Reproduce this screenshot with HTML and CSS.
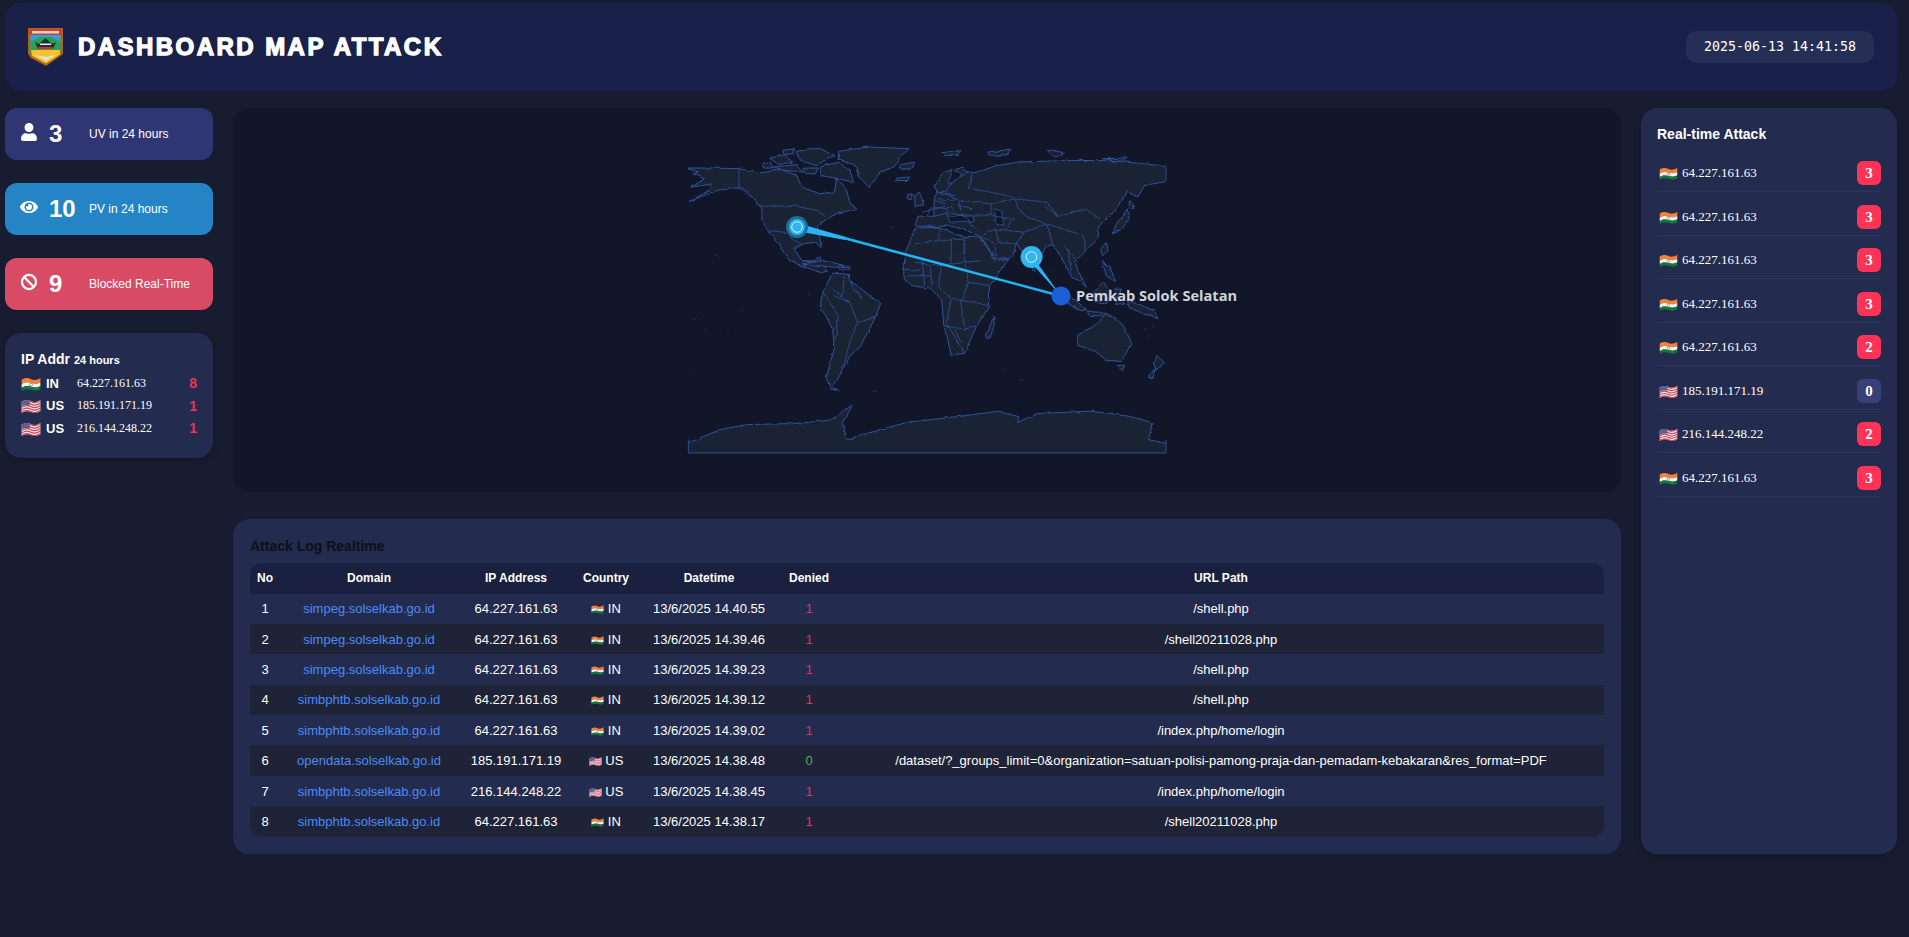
FILE: index.html
```html
<!DOCTYPE html>
<html>
  <head>
    <meta charset="utf-8" />
    <title>Dashboard Map Attack</title>
    <meta name="viewport" content="width=device-width, initial-scale=1" />
    <link rel="stylesheet" href="styles.css">
  </head>
  <body>
    <svg class="defs" width="0" height="0">
      <symbol id="flag-in" viewBox="0 0 32 24">
        <path fill="#f58233" d="M1 6C7 2 12 3 16 5S25 7 31 3V10C25 14 20 12 16 11S7 9 1 13Z"/>
        <path fill="#f4f2ee" d="M1 13C7 9 12 10 16 11S25 14 31 10V16C25 20 20 18 16 17S7 15 1 19Z"/>
        <path fill="#0f7a3a" d="M1 19C7 15 12 16 16 17S25 20 31 16V21C25 25 20 23 16 22S7 20 1 24Z"/>
        <circle cx="16" cy="14" r="2.4" fill="none" stroke="#5a6a9a" stroke-width=".9"/>
      </symbol>
      <symbol id="flag-us" viewBox="0 0 32 24">
        <path fill="#efe6e8" d="M1 6C7 2 12 3 16 5S25 7 31 3V21C25 25 20 23 16 22S7 20 1 24Z"/>
        <g fill="none" stroke="#c8485c" stroke-width="1.9">
          <path d="M1 7C7 3 12 4 16 6S25 8 31 4"/>
          <path d="M1 11C7 7 12 8 16 10S25 12 31 8"/>
          <path d="M1 15C7 11 12 12 16 14S25 16 31 12"/>
          <path d="M1 19C7 15 12 16 16 18S25 20 31 16"/>
          <path d="M1 23C7 19 12 20 16 22S25 24 31 20"/>
        </g>
        <path fill="#5a5f8e" d="M1 6C5 3.500 10 3 14 4.400V12C10 10.500 5 11 1 13.500Z"/>
      </symbol>
      <filter id="rough" x="-3%" y="-3%" width="106%" height="106%" color-interpolation-filters="sRGB">
        <feTurbulence type="fractalNoise" baseFrequency="0.045" numOctaves="3" seed="7"/>
        <feDisplacementMap in="SourceGraphic" scale="9" xChannelSelector="R" yChannelSelector="G"/>
      </filter>
      <clipPath id="map-clip">
        <rect x="47" y="20" width="1249" height="950"/>
      </clipPath>
    </svg>

    <header class="topbar">
      <div class="brand">
        <svg class="logo" viewBox="0 0 35 38">
          <path fill="#a8651c" d="M0 0H35V26L18 38 3 30 0 26Z"/>
          <path fill="#e5322e" d="M1.500 1.500H33.500V7H1.500Z"/>
          <path fill="#f5d9c8" d="M4 3H31V5.500H4Z"/>
          <path fill="#2aa4e0" d="M2.500 7H32.500V22H2.500Z"/>
          <path fill="#2f9e4f" d="M2.500 14 12 9H23L32.500 14V24H2.500Z"/>
          <path fill="#12343a" d="M7 14 11 16 17.500 10 24 16 28 14 25 21H10Z"/>
          <path fill="#dfeef0" d="M12 15.500H23V17H12Z"/>
          <path fill="#e0262b" d="M10 19H25V21H10Z"/>
          <path fill="#f4c430" d="M3 22H32V26.500L18 35.500 4 28Z"/>
          <path fill="#dfe3d8" d="M7 27 18 29 28 27 18 33Z"/>
        </svg>
        <h1 class="brand-title">DASHBOARD MAP ATTACK</h1>
      </div>
      <div class="clock">2025-06-13 14:41:58</div>
    </header>

    <main class="layout">
      <aside class="left-col">
        <div class="stat stat-uv">
          <svg class="stat-icon" viewBox="0 0 448 512"><path fill="currentColor" d="M224 256c70.700 0 128-57.300 128-128S294.700 0 224 0 96 57.300 96 128s57.300 128 128 128zm89.600 32h-16.700c-22.200 10.200-46.900 16-72.900 16s-50.600-5.800-72.900-16h-16.700C60.200 288 0 348.200 0 422.400V464c0 26.500 21.500 48 48 48h352c26.500 0 48-21.500 48-48v-41.600c0-74.200-60.200-134.400-134.400-134.400z"/></svg>
          <span class="stat-num">3</span>
          <span class="stat-label">UV in 24 hours</span>
        </div>
        <div class="stat stat-pv">
          <svg class="stat-icon" viewBox="0 0 576 512"><path fill="currentColor" d="M572.520 241.400C518.290 135.590 410.930 64 288 64S57.680 135.640 3.480 241.410a32.350 32.350 0 0 0 0 29.190C57.710 376.410 165.070 448 288 448s230.320-71.640 284.520-177.410a32.350 32.350 0 0 0 0-29.190zM288 400a144 144 0 1 1 144-144 143.930 143.930 0 0 1-144 144zm0-240a95.310 95.310 0 0 0-25.310 3.790 47.850 47.850 0 0 1-66.900 66.900A95.780 95.780 0 1 0 288 160z"/></svg>
          <span class="stat-num">10</span>
          <span class="stat-label">PV in 24 hours</span>
        </div>
        <div class="stat stat-block">
          <svg class="stat-icon" viewBox="0 0 20 20"><g fill="none" stroke="currentColor" stroke-width="2.500"><circle cx="10" cy="10" r="7.800"/><path d="M4.500 4.500 15.500 15.500"/></g></svg>
          <span class="stat-num">9</span>
          <span class="stat-label">Blocked Real-Time</span>
        </div>
        <section class="ip-card">
          <h3 class="ip-title">IP Addr <small>24 hours</small></h3>
          <div class="ip-row">
            <svg class="flag"><use href="#flag-in"/></svg><b class="ip-code">IN</b><span class="ip-addr">64.227.161.63</span><b class="ip-count">8</b>
          </div>
          <div class="ip-row">
            <svg class="flag"><use href="#flag-us"/></svg><b class="ip-code">US</b><span class="ip-addr">185.191.171.19</span><b class="ip-count">1</b>
          </div>
          <div class="ip-row">
            <svg class="flag"><use href="#flag-us"/></svg><b class="ip-code">US</b><span class="ip-addr">216.144.248.22</span><b class="ip-count">1</b>
          </div>
        </section>
      </aside>

      <div class="center-col">
        <section class="map-panel">
          <div class="map">
            <!-- land traced by hand, stretched to the box -->
            <svg class="map-land" viewBox="47 55 1249 915" preserveAspectRatio="none">
              <g clip-path="url(#map-clip)">
                <g filter="url(#rough)">
                  <g class="land">
                    <path d="M40 118 75 130 60 135 90 150 55 175 110 165 100 185 60 212 50 218 110 190 150 178 190 178 215 205 240 240 240 275 255 305 285 345 310 392 345 410 380 425 398 432 412 425 400 410 395 385 378 395 345 395 325 362 345 345 380 340 395 355 392 330 385 300 405 272 440 252 488 240 470 222 460 180 435 150 430 190 385 195 345 175 330 140 290 122 240 132 180 120 115 118Z"/>
                    <path d="M260 88 300 78 320 100 285 108ZM330 68 390 58 430 80 380 110 340 95ZM270 115 330 108 350 130 300 125ZM390 115 440 100 470 125 480 160 440 150 395 140ZM240 105 262 100 268 118 245 118ZM350 118 385 118 380 135 355 135ZM295 65 325 60 322 75 298 78Z"/>
                    <path d="M440 68 520 55 625 60 600 85 585 115 550 130 520 176 495 145 482 108 440 90Z"/>
                    <path d="M400 487 425 432 465 436 470 455 495 475 550 525 535 568 497 652 470 680 445 735 425 775 445 787 420 778 408 745 430 655 425 600 392 530Z"/>
                    <path d="M345 405 395 395 425 400 455 410 430 415 395 410ZM590 148 625 145 622 155 590 155ZM440 412 470 412 470 420 442 420Z"/>
                    <path d="M640 298 700 295 770 325 812 325 850 395 885 388 835 470 835 530 800 592 770 672 735 677 715 585 710 512 680 477 632 470 610 440 615 372Z"/>
                    <path d="M846 560 825 625 835 628 847 590Z"/>
                    <path d="M640 292 648 262 690 262 690 210 705 160 745 122 795 132 850 112 910 100 1050 95 1150 96 1240 105 1310 115 1310 155 1240 170 1222 205 1195 190 1165 240 1122 290 1118 330 1085 368 1055 400 1090 478 1070 455 1050 445 1030 402 1002 347 982 352 950 428 925 372 905 345 895 385 850 388 812 322 770 302 735 292 700 292Z"/>
                    <path d="M690 172 715 130 760 118 778 130 745 150 720 190 700 192ZM640 200 652 190 664 228 640 232ZM622 198 635 195 632 212 620 210ZM600 108 640 100 630 122 605 120ZM830 70 890 62 880 78 835 80ZM710 72 760 66 750 80 715 80ZM985 62 1030 72 1005 85ZM1130 90 1195 88 1180 98Z"/>
                    <path d="M1172 280 1195 240 1200 270 1180 300 1155 312ZM1200 215 1215 235 1200 238ZM1125 362 1140 340 1145 365 1130 380ZM1130 395 1150 415 1165 460 1140 440Z"/>
                    <path d="M1002 482 1050 505 1088 540 1075 545 1025 515ZM1090 545 1150 555 1150 562 1095 558ZM1105 490 1130 460 1155 485 1140 525 1112 520ZM1165 480 1180 480 1170 505 1190 525 1165 525ZM1195 510 1265 545 1275 565 1240 555 1200 535Z"/>
                    <path d="M1065 618 1110 588 1140 555 1172 575 1185 590 1206 640 1180 697 1140 692 1105 660 1066 650ZM1170 708 1188 708 1180 725ZM1272 678 1292 700 1270 720 1265 705ZM1268 715 1262 745 1250 745Z"/>
                    <path d="M40 945 130 900 200 885 320 882 420 872 478 825 450 880 462 930 520 910 620 878 760 860 860 845 912 862 905 880 960 852 1100 845 1200 860 1262 880 1250 930 1310 945 1310 990 40 990Z"/>
                  </g>
                  <g class="seas">
                    <path d="M725 262 790 258 795 275 730 280ZM848 240 866 245 872 290 852 282ZM740 120 760 135 745 160 725 165Z"/>
                  </g>
                  <g class="borders">
                    <path d="M180 120V175L240 232H330L385 245 405 262"/>
                    <path d="M255 305 300 310 340 345 320 358M345 395 380 400"/>
                    <path d="M425 480 470 520 490 580 470 640 445 735M400 490 440 560 430 650M470 455 500 510M490 580 535 565M455 440 450 500M430 500 470 520"/>
                    <path d="M640 345 700 335 705 300M705 335 770 330 770 400 810 395M640 400 710 410 700 470M710 410 770 400 780 460 840 470M700 470 735 510 800 520M735 510 720 590 770 600 800 590M660 395 665 470M620 440 680 440M735 400V330M780 460 760 520 770 600M725 585 770 672M680 410 685 470M610 420 660 425M800 520 835 530M745 600 760 640"/>
                    <path d="M860 340 905 345 925 310 850 300 812 322M840 225 900 210 985 220 1015 262 1085 240 1120 270M900 210 925 260 985 285 1000 345M925 310 985 285M985 285 1080 320 1085 368M1015 262 980 230M1000 345 1030 400M1040 360 1050 440M1025 345 1065 400M860 340 850 300M812 322 850 345 850 388M875 300 900 270"/>
                    <path d="M690 262 735 250 770 262 800 302M700 210 755 215 760 245M720 190 750 215M660 250 720 232M680 235 730 240M760 215 840 225 835 260 770 262M780 180 790 132M835 260 900 270M690 215 720 225M705 195 745 200M720 240 725 262M735 232 745 252M750 228 790 240M672 262 680 238M790 180 880 200 900 210"/>
                  </g>
                </g>
              </g>
              <path class="map-edge" d="M48 930V970H1296V930M1296 155V115"/>
              <g class="islands">
                <path d="M118 378h6M128 390h4M60 570h5M90 600h4M915 752h8M1240 600h5M1260 590h5M360 495h5M575 295h6M60 725h4M530 785h10M185 545h3M150 610h3M70 560h3M190 540h2M1250 620h4M960 470h3M1000 420h3M870 720h3"/>
              </g>
            </svg>
            <svg class="map-marks" viewBox="0 0 478 306">
              <path class="trail" d="M109 76 158 90 157 93 109 84Z"/>
              <path class="trail-line" d="M156 91 373 149"/>
              <path class="trail" d="M343 108 350 117 373 149 347 120 340 112Z"/>
              <circle class="pin-halo" cx="109" cy="80" r="11"/>
              <circle class="pin-core" cx="109" cy="80" r="8"/>
              <circle class="pin-ring" cx="109" cy="80" r="5.300"/>
              <circle class="pin-core" cx="343.500" cy="110" r="11"/>
              <circle class="pin-ring" cx="343.500" cy="110" r="5.300"/>
              <circle class="pin-target" cx="373" cy="149" r="9.500"/>
            </svg>
            <span class="map-label">Pemkab Solok Selatan</span>
          </div>
        </section>

        <section class="log-panel">
          <h3 class="log-title">Attack Log Realtime</h3>
          <div class="log-wrap">
            <table class="log-table">
              <colgroup>
                <col class="c-no"><col class="c-domain"><col class="c-ip"><col class="c-country"><col class="c-date"><col class="c-denied"><col>
              </colgroup>
              <thead>
                <tr><th>No</th><th>Domain</th><th>IP Address</th><th>Country</th><th>Datetime</th><th>Denied</th><th>URL Path</th></tr>
              </thead>
              <tbody>
                <tr><td>1</td><td class="domain">simpeg.solselkab.go.id</td><td>64.227.161.63</td><td><svg class="flag-sm"><use href="#flag-in"/></svg> IN</td><td>13/6/2025 14.40.55</td><td class="denied">1</td><td>/shell.php</td></tr>
                <tr><td>2</td><td class="domain">simpeg.solselkab.go.id</td><td>64.227.161.63</td><td><svg class="flag-sm"><use href="#flag-in"/></svg> IN</td><td>13/6/2025 14.39.46</td><td class="denied">1</td><td>/shell20211028.php</td></tr>
                <tr><td>3</td><td class="domain">simpeg.solselkab.go.id</td><td>64.227.161.63</td><td><svg class="flag-sm"><use href="#flag-in"/></svg> IN</td><td>13/6/2025 14.39.23</td><td class="denied">1</td><td>/shell.php</td></tr>
                <tr><td>4</td><td class="domain">simbphtb.solselkab.go.id</td><td>64.227.161.63</td><td><svg class="flag-sm"><use href="#flag-in"/></svg> IN</td><td>13/6/2025 14.39.12</td><td class="denied">1</td><td>/shell.php</td></tr>
                <tr><td>5</td><td class="domain">simbphtb.solselkab.go.id</td><td>64.227.161.63</td><td><svg class="flag-sm"><use href="#flag-in"/></svg> IN</td><td>13/6/2025 14.39.02</td><td class="denied">1</td><td>/index.php/home/login</td></tr>
                <tr><td>6</td><td class="domain">opendata.solselkab.go.id</td><td>185.191.171.19</td><td><svg class="flag-sm"><use href="#flag-us"/></svg> US</td><td>13/6/2025 14.38.48</td><td class="allowed">0</td><td>/dataset/?_groups_limit=0&amp;organization=satuan-polisi-pamong-praja-dan-pemadam-kebakaran&amp;res_format=PDF</td></tr>
                <tr><td>7</td><td class="domain">simbphtb.solselkab.go.id</td><td>216.144.248.22</td><td><svg class="flag-sm"><use href="#flag-us"/></svg> US</td><td>13/6/2025 14.38.45</td><td class="denied">1</td><td>/index.php/home/login</td></tr>
                <tr><td>8</td><td class="domain">simbphtb.solselkab.go.id</td><td>64.227.161.63</td><td><svg class="flag-sm"><use href="#flag-in"/></svg> IN</td><td>13/6/2025 14.38.17</td><td class="denied">1</td><td>/shell20211028.php</td></tr>
              </tbody>
            </table>
          </div>
        </section>
      </div>

      <aside class="feed">
        <h3 class="feed-title">Real-time Attack</h3>
        <ul class="feed-list">
          <li class="feed-row"><svg class="flag"><use href="#flag-in"/></svg><span class="feed-ip">64.227.161.63</span><b class="badge">3</b></li>
          <li class="feed-row"><svg class="flag"><use href="#flag-in"/></svg><span class="feed-ip">64.227.161.63</span><b class="badge">3</b></li>
          <li class="feed-row"><svg class="flag"><use href="#flag-in"/></svg><span class="feed-ip">64.227.161.63</span><b class="badge">3</b></li>
          <li class="feed-row"><svg class="flag"><use href="#flag-in"/></svg><span class="feed-ip">64.227.161.63</span><b class="badge">3</b></li>
          <li class="feed-row"><svg class="flag"><use href="#flag-in"/></svg><span class="feed-ip">64.227.161.63</span><b class="badge">2</b></li>
          <li class="feed-row"><svg class="flag"><use href="#flag-us"/></svg><span class="feed-ip">185.191.171.19</span><b class="badge badge-zero">0</b></li>
          <li class="feed-row"><svg class="flag"><use href="#flag-us"/></svg><span class="feed-ip">216.144.248.22</span><b class="badge">2</b></li>
          <li class="feed-row"><svg class="flag"><use href="#flag-in"/></svg><span class="feed-ip">64.227.161.63</span><b class="badge">3</b></li>
        </ul>
      </aside>
    </main>
  </body>
</html>
```

FILE: styles.css
```css
* {
  box-sizing: border-box;
}
html, body {
  height: 100%;
}
body {
  margin: 0;
  padding: 3px 12px 0 5px;
  background: #171c30;
  color: #fff;
  font-family: "Liberation Sans", Arial, sans-serif;
  overflow: hidden;
}
h1, h3, ul {
  margin: 0;
  padding: 0;
}
.defs {
  position: absolute;
}

/* header */
.topbar {
  height: 88px;
  display: flex;
  align-items: center;
  justify-content: space-between;
  padding: 0 23px;
  background: #19214a;
  border-radius: 16px;
}
.brand {
  display: flex;
  align-items: center;
  gap: 15px;
}
.logo {
  width: 35px;
  height: 38px;
  flex: none;
}
.brand-title {
  font-size: 24px;
  font-weight: 700;
  letter-spacing: 2.45px;
  -webkit-text-stroke: 1.3px #fff;
}
.clock {
  width: 188px;
  height: 32px;
  line-height: 32px;
  text-align: center;
  background: #252e55;
  border-radius: 10px;
  font-family: "DejaVu Sans Mono", monospace;
  font-size: 13.3px;
}

/* page columns */
.layout {
  display: grid;
  grid-template-columns: 208px 1388px 256px;
  gap: 20px;
  margin-top: 17px;
}
.left-col {
  display: flex;
  flex-direction: column;
  gap: 23px;
}

/* stat cards */
.stat {
  height: 52px;
  display: flex;
  align-items: center;
  padding-left: 15px;
  border-radius: 12px;
}
.stat-uv {
  background: #2f3673;
}
.stat-pv {
  background: #2584c6;
}
.stat-block {
  background: #d94a64;
}
.stat-icon {
  width: 18px;
  height: 18px;
  flex: none;
  margin-right: 11px;
  margin-top: -4px;
  color: #fff;
}
.stat-num {
  width: 40px;
  font-size: 24px;
  font-weight: 700;
}
.stat-label {
  font-size: 12px;
}

/* ip card */
.ip-card {
  height: 125px;
  padding: 17px 16px 0 16px;
  background: #232b4e;
  border-radius: 16px;
  box-shadow: 0 2px 6px rgba(0, 0, 0, 0.25);
}
.ip-title {
  font-size: 14px;
  line-height: 18px;
  margin-bottom: 3px;
}
.ip-title small {
  font-size: 11px;
}
.ip-row {
  display: flex;
  align-items: center;
  height: 22.5px;
}
.flag {
  width: 20px;
  height: 15px;
  flex: none;
}
.ip-code {
  width: 36px;
  padding-left: 5px;
  font-size: 13px;
}
.ip-addr {
  flex: 1;
  font-family: "Liberation Serif", serif;
  font-size: 12px;
}
.ip-count {
  color: #f0305a;
  font-size: 14px;
}

/* map */
.center-col {
  display: flex;
  flex-direction: column;
  gap: 27px;
}
.map-panel {
  height: 384px;
  display: flex;
  align-items: center;
  justify-content: center;
  background: #111629;
  border-radius: 16px;
}
.map {
  position: relative;
  width: 478px;
  height: 306px;
}
.map-land,
.map-marks {
  position: absolute;
  left: 0;
  top: 0;
  width: 100%;
  height: 100%;
  overflow: visible;
}
.land path {
  fill: #1a2333;
  stroke: #30539e;
  stroke-width: 1;
  vector-effect: non-scaling-stroke;
}
.seas path {
  fill: #111629;
  stroke: #30539e;
  stroke-width: 0.8;
  vector-effect: non-scaling-stroke;
}
.borders path {
  fill: none;
  stroke: #30539e;
  stroke-width: 0.8;
  vector-effect: non-scaling-stroke;
}
.map-edge {
  fill: none;
  stroke: #2c4c90;
  stroke-width: 1;
  vector-effect: non-scaling-stroke;
}
.islands path {
  fill: none;
  stroke: #223a70;
  stroke-width: 1;
  vector-effect: non-scaling-stroke;
}
.trail {
  fill: #29b6f6;
}
.trail-line {
  stroke: #20b4f4;
  stroke-width: 2.6;
}
.pin-halo {
  fill: #1a6f9c;
}
.pin-core {
  fill: #2eb5f2;
}
.pin-ring {
  fill: none;
  stroke: #e8f8ff;
  stroke-width: 0.9;
}
.pin-target {
  fill: #1c5fd6;
}
.map-label {
  position: absolute;
  left: 388px;
  top: 138px;
  font-family: "Open Sans", sans-serif;
  font-size: 14.6px;
  font-weight: 700;
  line-height: 20px;
  white-space: nowrap;
  color: #d0d3d8;
}

/* attack log */
.log-panel {
  height: 335px;
  padding: 17.5px 17px 0 17px;
  background: #232b4e;
  border-radius: 16px;
}
.log-title {
  font-size: 14px;
  line-height: 18px;
  margin-bottom: 8px;
  color: #0d1018;
}
.log-wrap {
  border-radius: 12px;
  overflow: hidden;
}
.log-table {
  width: 100%;
  border-collapse: collapse;
  table-layout: fixed;
  text-align: center;
  font-size: 13px;
}
.c-no {
  width: 30px;
}
.c-domain {
  width: 178px;
}
.c-ip {
  width: 116px;
}
.c-country {
  width: 64px;
}
.c-date {
  width: 142px;
}
.c-denied {
  width: 58px;
}
.log-table th {
  height: 31px;
  padding: 0;
  background: #1a2040;
  font-size: 12px;
}
.log-table td {
  height: 30.4px;
  padding: 0;
  white-space: nowrap;
}
.log-table tbody tr:nth-child(odd) {
  background: #232b4e;
}
.log-table tbody tr:nth-child(even) {
  background: #1e2338;
}
.domain {
  color: #4a8cf7;
}
.denied {
  color: #e8305a;
}
.allowed {
  color: #4caf50;
}
.flag-sm {
  width: 13px;
  height: 10px;
  vertical-align: -1px;
}

/* realtime feed */
.feed {
  height: 746px;
  padding: 17px 16px 0 16px;
  background: #232b4e;
  border-radius: 16px;
  box-shadow: 0 2px 6px rgba(0, 0, 0, 0.25);
}
.feed-title {
  font-size: 14px;
  line-height: 18px;
  margin-bottom: 5.5px;
}
.feed-list {
  list-style: none;
}
.feed-row {
  height: 43.5px;
  display: flex;
  align-items: center;
  padding: 12.5px 0 6px 2px;
  border-bottom: 1px solid #2a3360;
}
.feed-row .flag {
  width: 19px;
  height: 14px;
}
.feed-ip {
  flex: 1;
  padding-left: 4px;
  font-family: "Liberation Serif", serif;
  font-size: 13px;
}
.badge {
  width: 24px;
  height: 24px;
  line-height: 24px;
  text-align: center;
  border-radius: 6px;
  background: #ff3358;
  font-family: "Liberation Serif", serif;
  font-size: 15px;
}
.badge-zero {
  background: #374177;
}
```
